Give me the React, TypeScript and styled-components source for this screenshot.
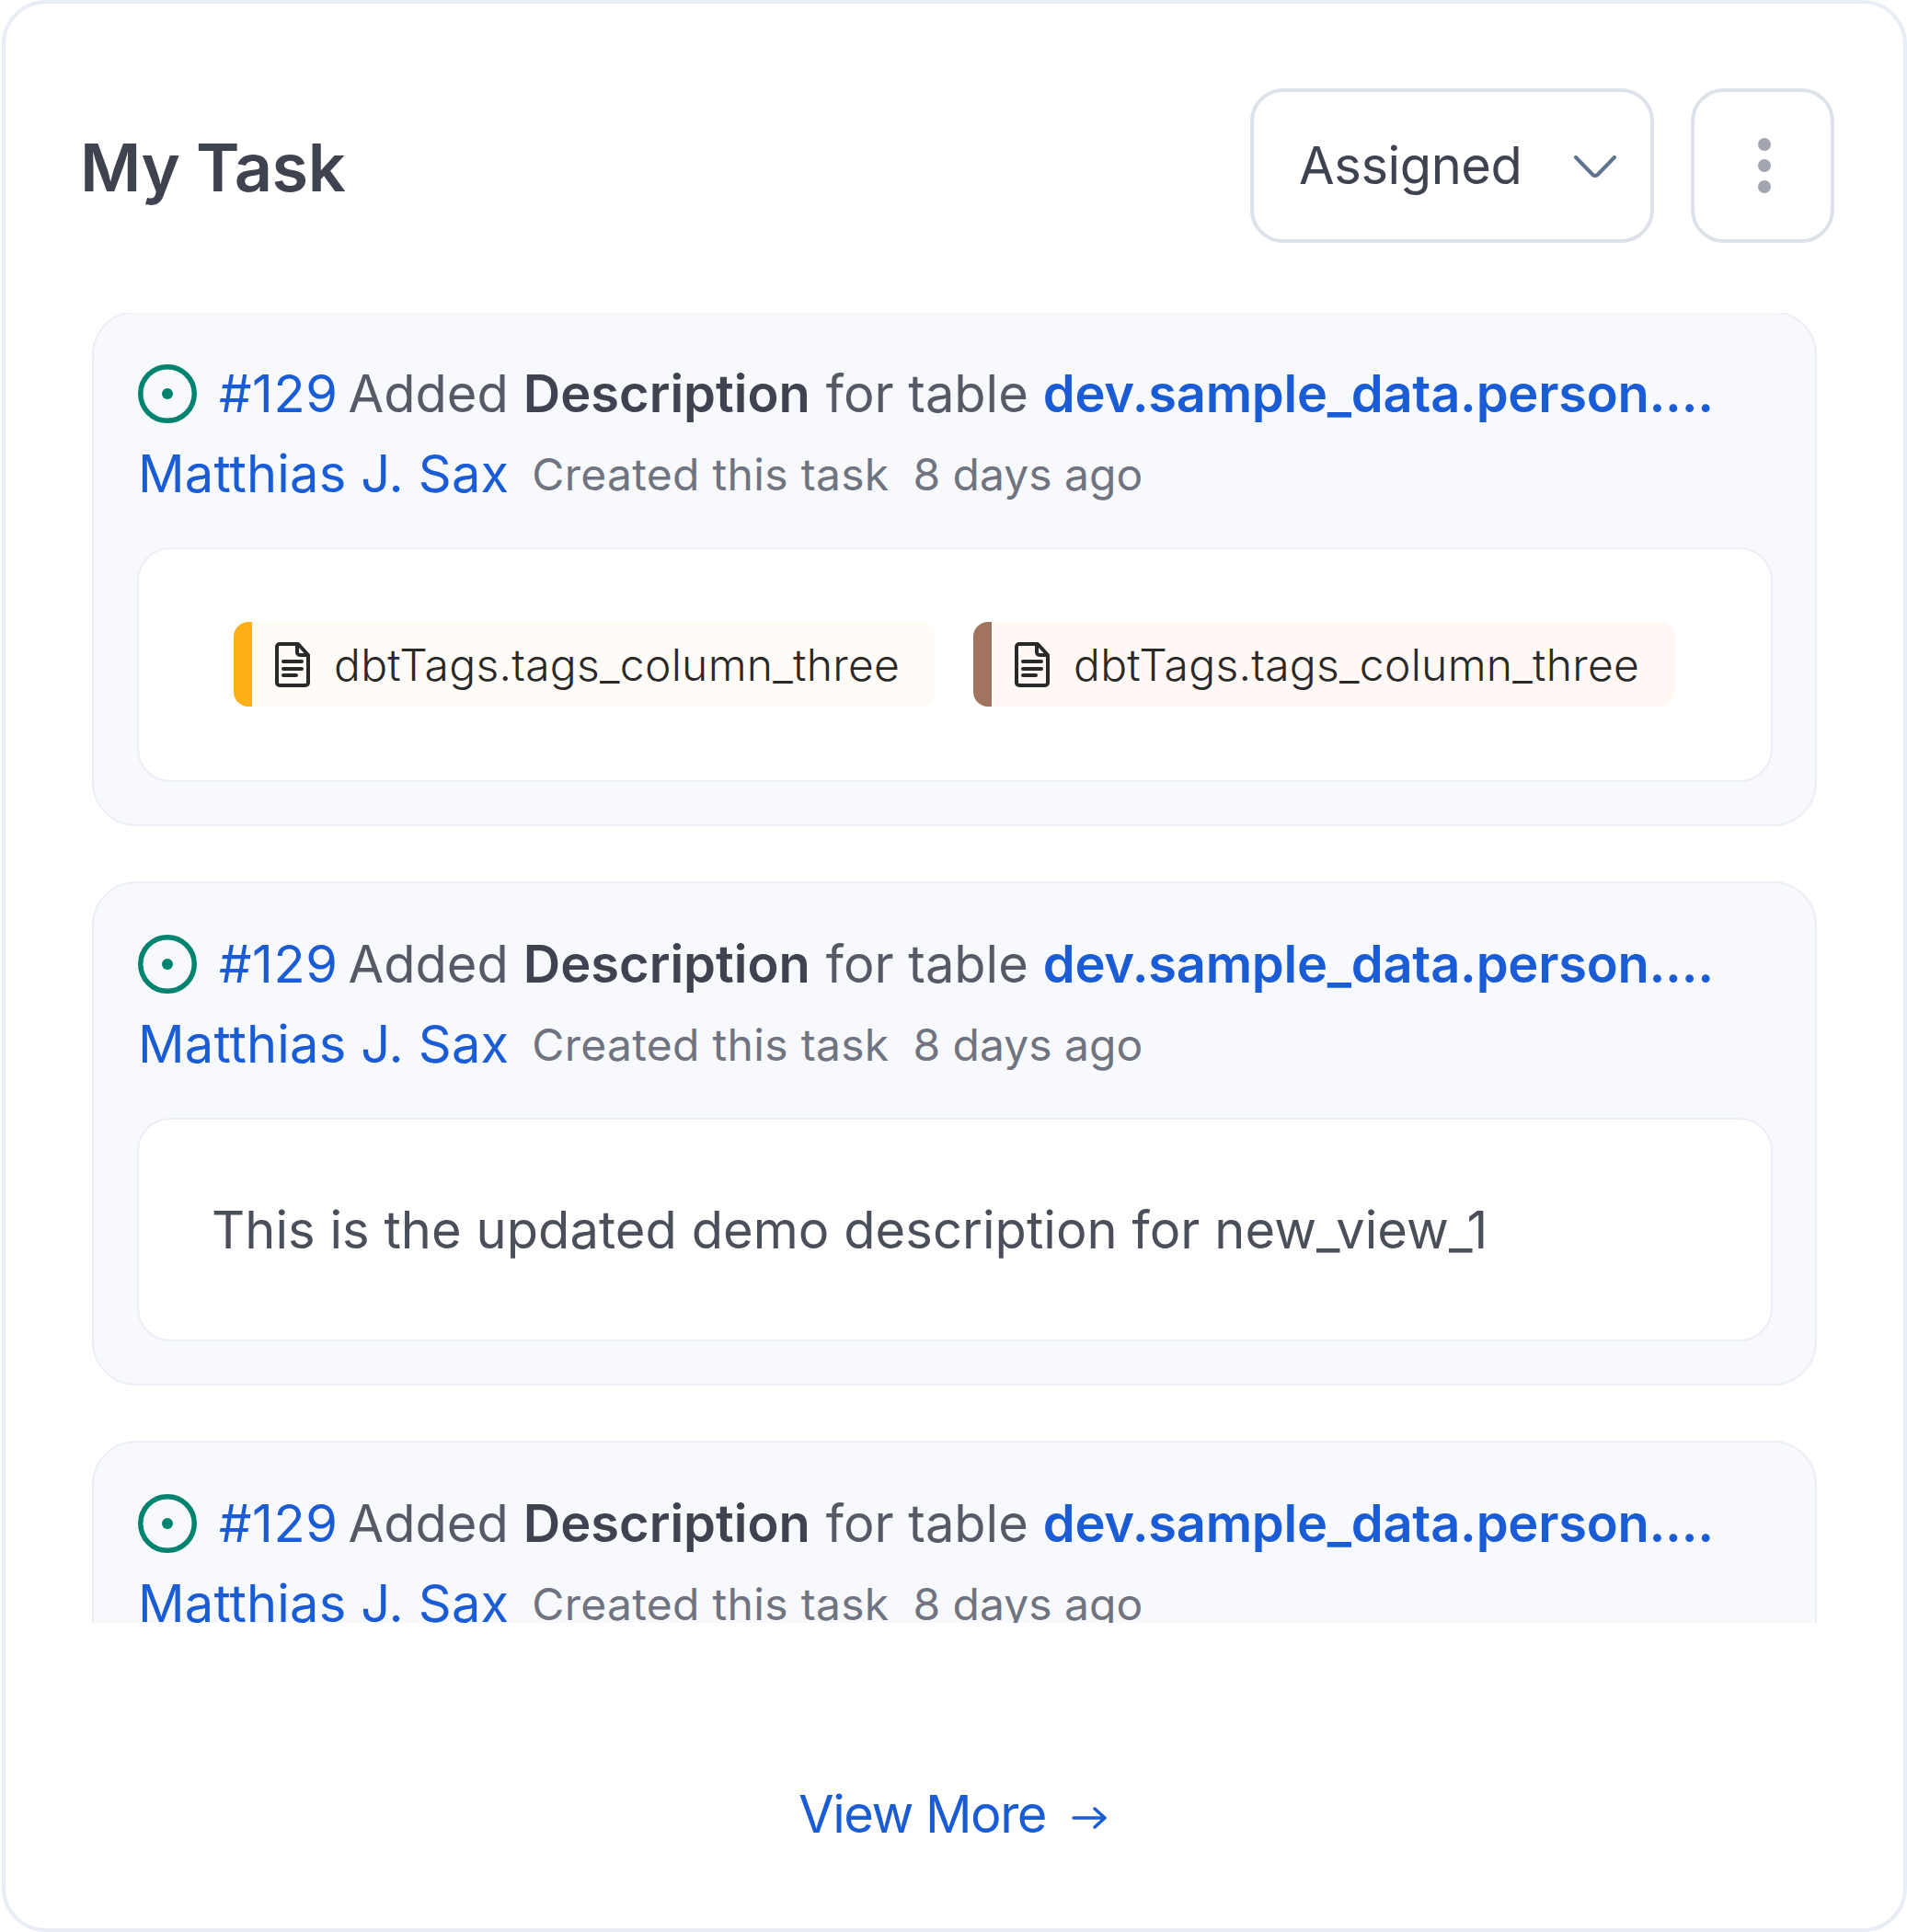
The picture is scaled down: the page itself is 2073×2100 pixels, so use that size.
import React from "react";
import styled, { createGlobalStyle } from "styled-components";

const GlobalStyle = createGlobalStyle`
  html, body {
    margin: 0;
    padding: 0;
    background: #ffffff;
  }
  * {
    box-sizing: border-box;
  }
`;

const Panel = styled.div`
  display: flex;
  flex-direction: column;
  width: 2071px;
  height: 2100px;
  margin-left: 2px;
  padding-top: 92px;
  background: #ffffff;
  border: 4px solid #e9edf6;
  border-radius: 48px;
  font-family: Inter, "Liberation Sans", sans-serif;
`;

const Header = styled.div`
  display: flex;
  align-items: center;
  justify-content: space-between;
  height: 168px;
  padding: 0 75px 0 81px;
`;

const Title = styled.h2`
  margin: 2px 0 0;
  font-size: 72px;
  font-weight: 600;
  letter-spacing: -0.5px;
  color: #3f434f;
`;

const Actions = styled.div`
  display: flex;
  gap: 40px;
`;

const SelectBox = styled.div`
  display: flex;
  align-items: center;
  justify-content: space-between;
  width: 439px;
  height: 168px;
  padding: 0 37px 0 49px;
  border: 4px solid #dde1ea;
  border-radius: 36px;
  font-size: 56px;
  letter-spacing: -0.4px;
  color: #3f434f;
`;

const Chevron = styled.svg`
  width: 46px;
  height: 24px;
  margin-top: 2px;
`;

const KebabButton = styled.div`
  display: flex;
  flex-direction: column;
  align-items: center;
  justify-content: center;
  gap: 9px;
  width: 156px;
  height: 168px;
  padding-left: 4px;
  border: 4px solid #dde1ea;
  border-radius: 36px;
`;

const Dot = styled.span`
  width: 14px;
  height: 14px;
  border-radius: 50%;
  background: #a3a6af;
`;

const List = styled.div`
  display: flex;
  flex-direction: column;
  gap: 60px;
  height: 1424px;
  margin: 76px 94px 0 94px;
  overflow: hidden;
  flex-shrink: 0;
`;

const Card = styled.div`
  flex-shrink: 0;
  padding: 56px 46px 46px 47px;
  background: #f8f9fd;
  border: 2px solid #eceef6;
  border-radius: 48px;

  &:first-child {
    margin-top: -2px;
  }
`;

const TitleRow = styled.div`
  display: flex;
  align-items: center;
  height: 64px;
  padding-left: 1px;
  font-size: 56px;
  color: #555a66;
  white-space: nowrap;
`;

const StatusIcon = styled.svg`
  width: 64px;
  height: 64px;
  margin-right: 24px;
  flex-shrink: 0;
`;

const Number = styled.span`
  color: #1a5bd6;
  letter-spacing: 0.6px;
  margin-right: 11px;
`;

const Bold = styled.span`
  font-weight: 600;
  color: #3f434f;
  margin: 0 17px 0 16px;
`;

const TableLink = styled.span`
  font-weight: 600;
  color: #1a5bd6;
  letter-spacing: -0.26px;
  margin-left: 16px;
`;

const MetaRow = styled.div`
  display: flex;
  align-items: center;
  height: 64px;
  margin-top: 23px;
  white-space: nowrap;
`;

const Author = styled.span`
  font-size: 56px;
  letter-spacing: 0.18px;
  color: #1a5bd6;
  margin-left: 1px;
  margin-right: 25px;
`;

const Meta = styled.span`
  font-size: 48px;
  color: #6f7480;
`;

const MetaAction = styled(Meta)`
  letter-spacing: 0.3px;
  margin-right: 26px;
`;

const Inner = styled.div`
  display: flex;
  align-items: center;
  margin-top: 48px;
  background: #ffffff;
  border: 2px solid #eceef6;
  border-radius: 36px;
`;

const TagsInner = styled(Inner)`
  height: 255px;
  padding: 0 0 1px 103px;
  gap: 41px;
`;

const TextInner = styled(Inner)`
  height: 243px;
  padding-left: 79px;
  font-size: 56px;
  letter-spacing: 0.06px;
  color: #4b4f5a;
`;

const Tag = styled.div<{ $bar: string; $bg: string }>`
  display: flex;
  align-items: center;
  width: 763px;
  height: 92px;
  padding-left: 25px;
  background: ${(p) => p.$bg};
  border-left: 20px solid ${(p) => p.$bar};
  border-radius: 16px;
  font-size: 48px;
  font-weight: 300;
  letter-spacing: 0.27px;
  color: #292929;
  white-space: nowrap;
`;

const FileIcon = styled.svg`
  width: 38px;
  height: 49px;
  margin-right: 26px;
  flex-shrink: 0;
`;

const Footer = styled.div`
  display: flex;
  align-items: center;
  justify-content: center;
  flex: 1;
  padding: 84px 4px 0 0;
  font-size: 56px;
  letter-spacing: -1.5px;
  color: #1a5bd6;
`;

const ArrowIcon = styled.svg`
  width: 38px;
  height: 26px;
  margin-left: 28px;
  margin-top: 8px;
`;

const Status = () => (
  <StatusIcon viewBox="0 0 64 64" fill="none">
    <circle cx="32" cy="32" r="29.25" stroke="#00846f" strokeWidth="5.5" />
    <circle cx="32" cy="32" r="6" fill="#00846f" />
  </StatusIcon>
);

const File = () => (
  <FileIcon viewBox="0 0 38 49" fill="none" stroke="#292929" strokeWidth="4">
    <path d="M5 2h20l11 12v30a3 3 0 0 1-3 3H5a3 3 0 0 1-3-3V5a3 3 0 0 1 3-3z" strokeLinejoin="round" />
    <path d="M24 2v9a3 3 0 0 0 3 3h9" strokeLinejoin="round" />
    <path d="M9 21h20M9 29h20M9 36h14" strokeLinecap="round" />
  </FileIcon>
);

const CardHead = () => (
  <>
    <TitleRow>
      <Status />
      <Number>#129</Number>
      Added<Bold>Description</Bold>for table<TableLink>dev.sample_data.person....</TableLink>
    </TitleRow>
    <MetaRow>
      <Author>Matthias J. Sax</Author>
      <MetaAction>Created this task</MetaAction>
      <Meta>8 days ago</Meta>
    </MetaRow>
  </>
);

const App: React.FC = () => {
  return (
    <Panel>
      <GlobalStyle />
      <Header>
        <Title>My Task</Title>
        <Actions>
          <SelectBox>
            Assigned
            <Chevron viewBox="0 0 46 24" fill="none" stroke="#5f7390" strokeWidth="4" strokeLinecap="round" strokeLinejoin="round">
              <path d="M2 2l18.5 19a3.5 3.5 0 0 0 5 0L44 2" />
            </Chevron>
          </SelectBox>
          <KebabButton>
            <Dot />
            <Dot />
            <Dot />
          </KebabButton>
        </Actions>
      </Header>
      <List>
        <Card>
          <CardHead />
          <TagsInner>
            <Tag $bar="#ffaf17" $bg="#fffcf8">
              <File />
              dbtTags.tags_column_three
            </Tag>
            <Tag $bar="#a17460" $bg="#fff8f5">
              <File />
              dbtTags.tags_column_three
            </Tag>
          </TagsInner>
        </Card>
        <Card>
          <CardHead />
          <TextInner>This is the updated demo description for new_view_1</TextInner>
        </Card>
        <Card>
          <CardHead />
        </Card>
      </List>
      <Footer>
        View More
        <ArrowIcon viewBox="0 0 38 26" fill="none" stroke="#1a5bd6" strokeWidth="3.5" strokeLinecap="round" strokeLinejoin="round">
          <path d="M2 13h34M25 3l11 10-11 10" />
        </ArrowIcon>
      </Footer>
    </Panel>
  );
};

export default App;
